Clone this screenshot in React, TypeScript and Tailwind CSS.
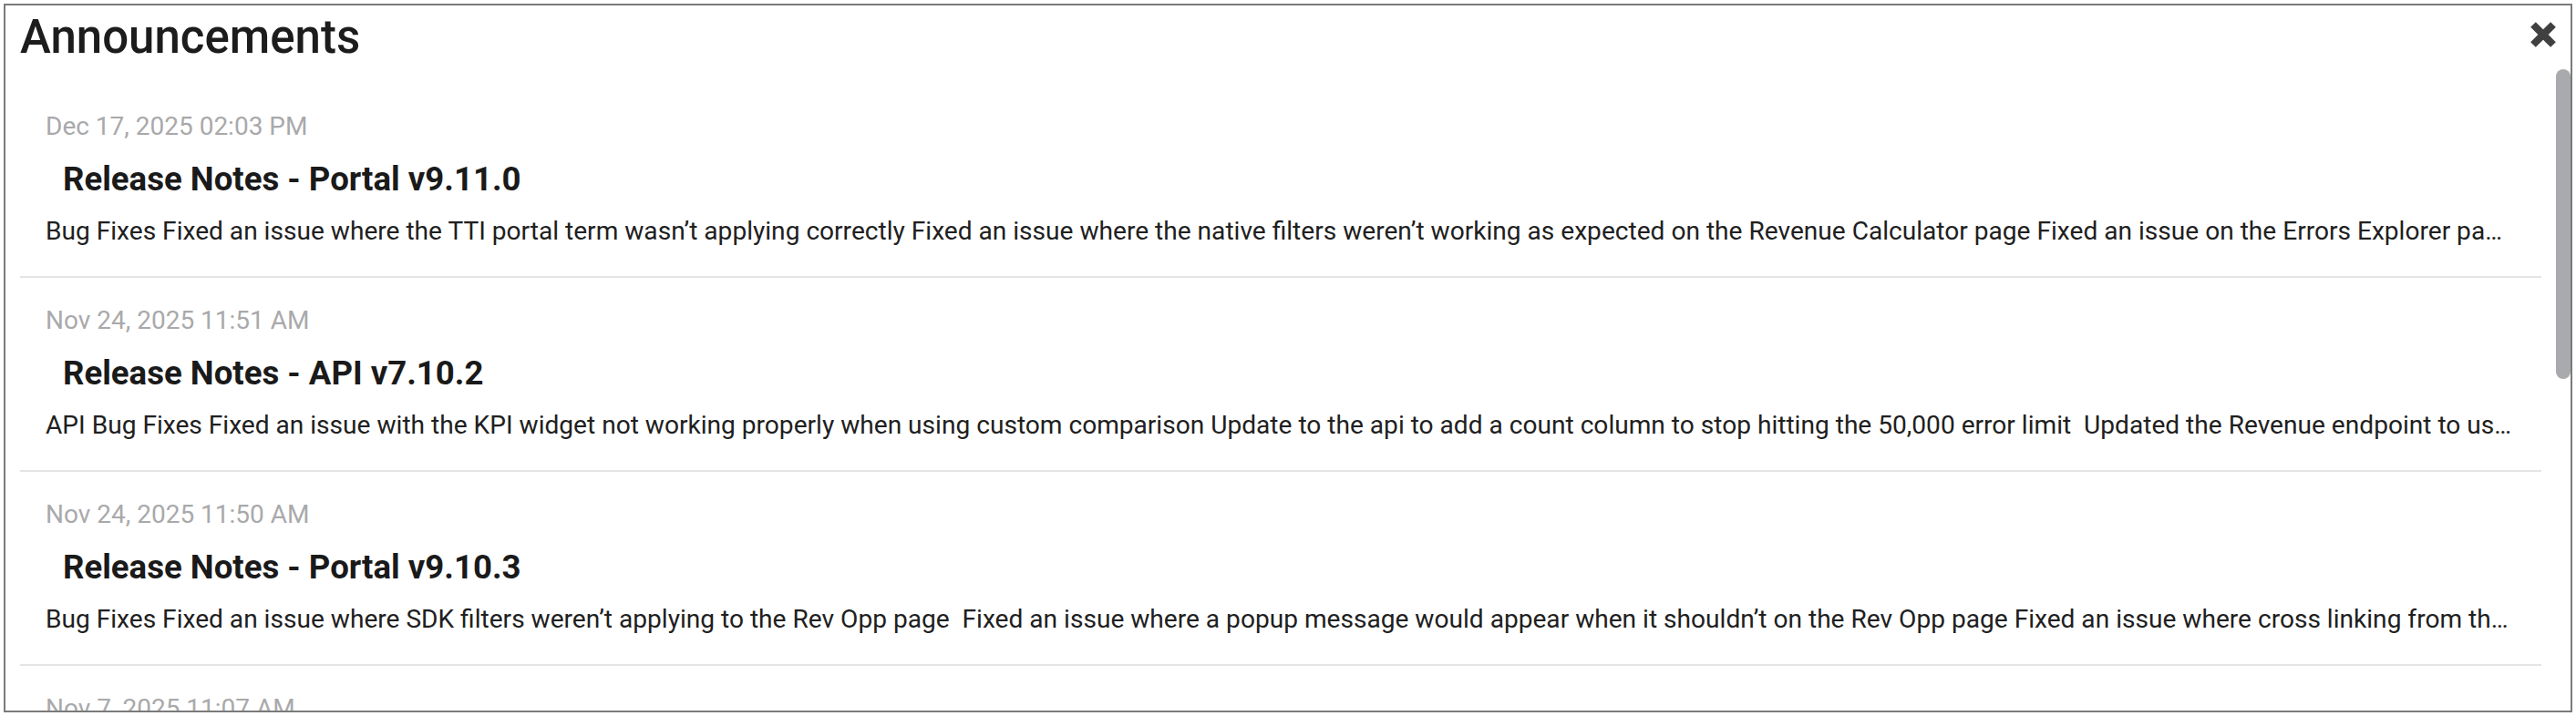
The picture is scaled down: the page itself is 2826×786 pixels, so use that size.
const announcements = [
  {
    date: 'Dec 17, 2025 02:03 PM',
    title: 'Release Notes - Portal v9.11.0',
    body: 'Bug Fixes Fixed an issue where the TTI portal term wasn’t applying correctly Fixed an issue where the native filters weren’t working as expected on the Revenue Calculator page Fixed an issue on the Errors Explorer page where the selected date range was not kept when switching tabs',
  },
  {
    date: 'Nov 24, 2025 11:51 AM',
    title: 'Release Notes - API v7.10.2',
    body: 'API Bug Fixes Fixed an issue with the KPI widget not working properly when using custom comparison Update to the api to add a count column to stop hitting the 50,000 error limit  Updated the Revenue endpoint to use the new aggregation tables',
  },
  {
    date: 'Nov 24, 2025 11:50 AM',
    title: 'Release Notes - Portal v9.10.3',
    body: 'Bug Fixes Fixed an issue where SDK filters weren’t applying to the Rev Opp page  Fixed an issue where a popup message would appear when it shouldn’t on the Rev Opp page Fixed an issue where cross linking from the Overview page lost the selected filters',
  },
  {
    date: 'Nov 7, 2025 11:07 AM',
    title: 'Release Notes - Portal v9.10.2',
    body: 'Bug Fixes Fixed an issue where exports were missing columns',
  },
]

function CloseIcon() {
  return (
    <svg width="28" height="28" viewBox="0 0 28 28" className="shrink-0">
      <path d="M3 3 L25 25 M25 3 L3 25" stroke="#404040" strokeWidth="8" strokeLinecap="butt" />
    </svg>
  )
}

export default function App() {
  return (
    <div className="w-[2826px] h-[786px] p-[4px] bg-white font-['Roboto',sans-serif]">
      <div className="h-full border-2 border-[#7a7a7a] flex flex-col">
        <div className="h-[70px] shrink-0 flex items-start justify-between pl-[16px] pr-[16px]">
          <h1 className="pt-[5px] text-[51px] leading-[60px] font-medium text-[#1c1c1c]">
            Announcements
          </h1>
          <button type="button" className="mt-[18px]">
            <CloseIcon />
          </button>
        </div>

        <div className="flex-1 min-h-0 flex gap-[16px] pl-[16px] overflow-hidden">
          <div className="flex-1 min-w-0 pt-[16px]">
            {announcements.map((a) => (
              <div key={a.date} className="border-b-2 border-[#e4e4e7] px-[28px] pt-[31px] pb-[33px]">
                <p className="text-[28px] leading-[32px] text-[#a9a9ab]">{a.date}</p>
                <h2 className="mt-[20px] ml-[19px] text-[36.6px] leading-[44px] font-bold text-[#1a1a1a]">
                  {a.title}
                </h2>
                <p className="mt-[19px] text-[28.1px] leading-[32px] text-[#202020] overflow-hidden text-ellipsis whitespace-pre">
                  {a.body}
                </p>
              </div>
            ))}
          </div>
          <div className="w-[16px] shrink-0">
            <div className="h-[340px] rounded-full bg-[#a9aaad]" />
          </div>
        </div>
      </div>
    </div>
  )
}
